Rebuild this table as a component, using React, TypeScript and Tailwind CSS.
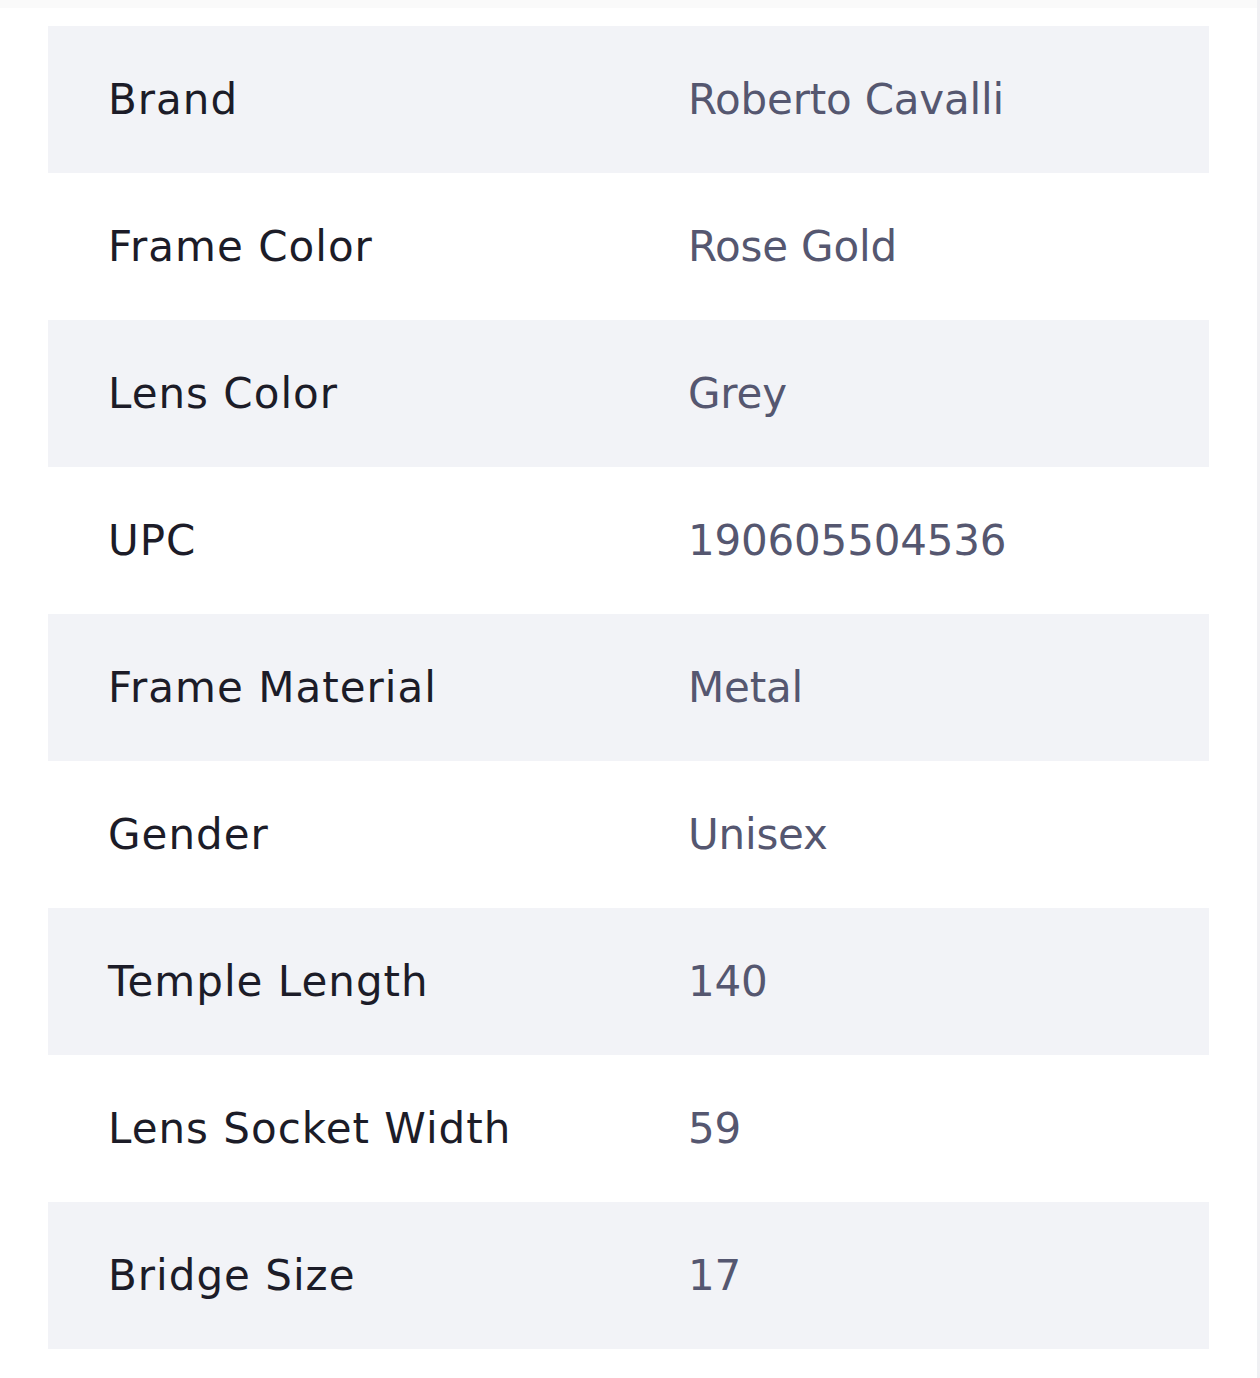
import React from "react";

const rows: [string, string][] = [
  ["Brand", "Roberto Cavalli"],
  ["Frame Color", "Rose Gold"],
  ["Lens Color", "Grey"],
  ["UPC", "190605504536"],
  ["Frame Material", "Metal"],
  ["Gender", "Unisex"],
  ["Temple Length", "140"],
  ["Lens Socket Width", "59"],
  ["Bridge Size", "17"],
];

export default function App() {
  return (
    <div className="min-h-[1378px] w-[1260px] bg-white border-r-[3px] border-r-[#f0f0f3]">
      <div className="h-[8px] bg-[#fafafa]" />
      <div className="pt-[18px] pl-[48px]">
        <div className="w-[1161px] flex flex-col" style={{ fontFamily: "'DejaVu Sans', sans-serif" }}>
          {rows.map(([k, v], i) => (
            <div
              key={k}
              className={`grid grid-cols-[640px_1fr] items-center h-[147px] ${i % 2 === 0 ? "bg-[#f2f3f7]" : "bg-white"}`}
            >
              <div className="pl-[60px] text-[42px] tracking-[1px] font-medium text-[#1c1c28]">{k}</div>
              <div className="text-[42px] tracking-[-0.2px] text-[#555770]">{v}</div>
            </div>
          ))}
        </div>
      </div>
    </div>
  );
}
